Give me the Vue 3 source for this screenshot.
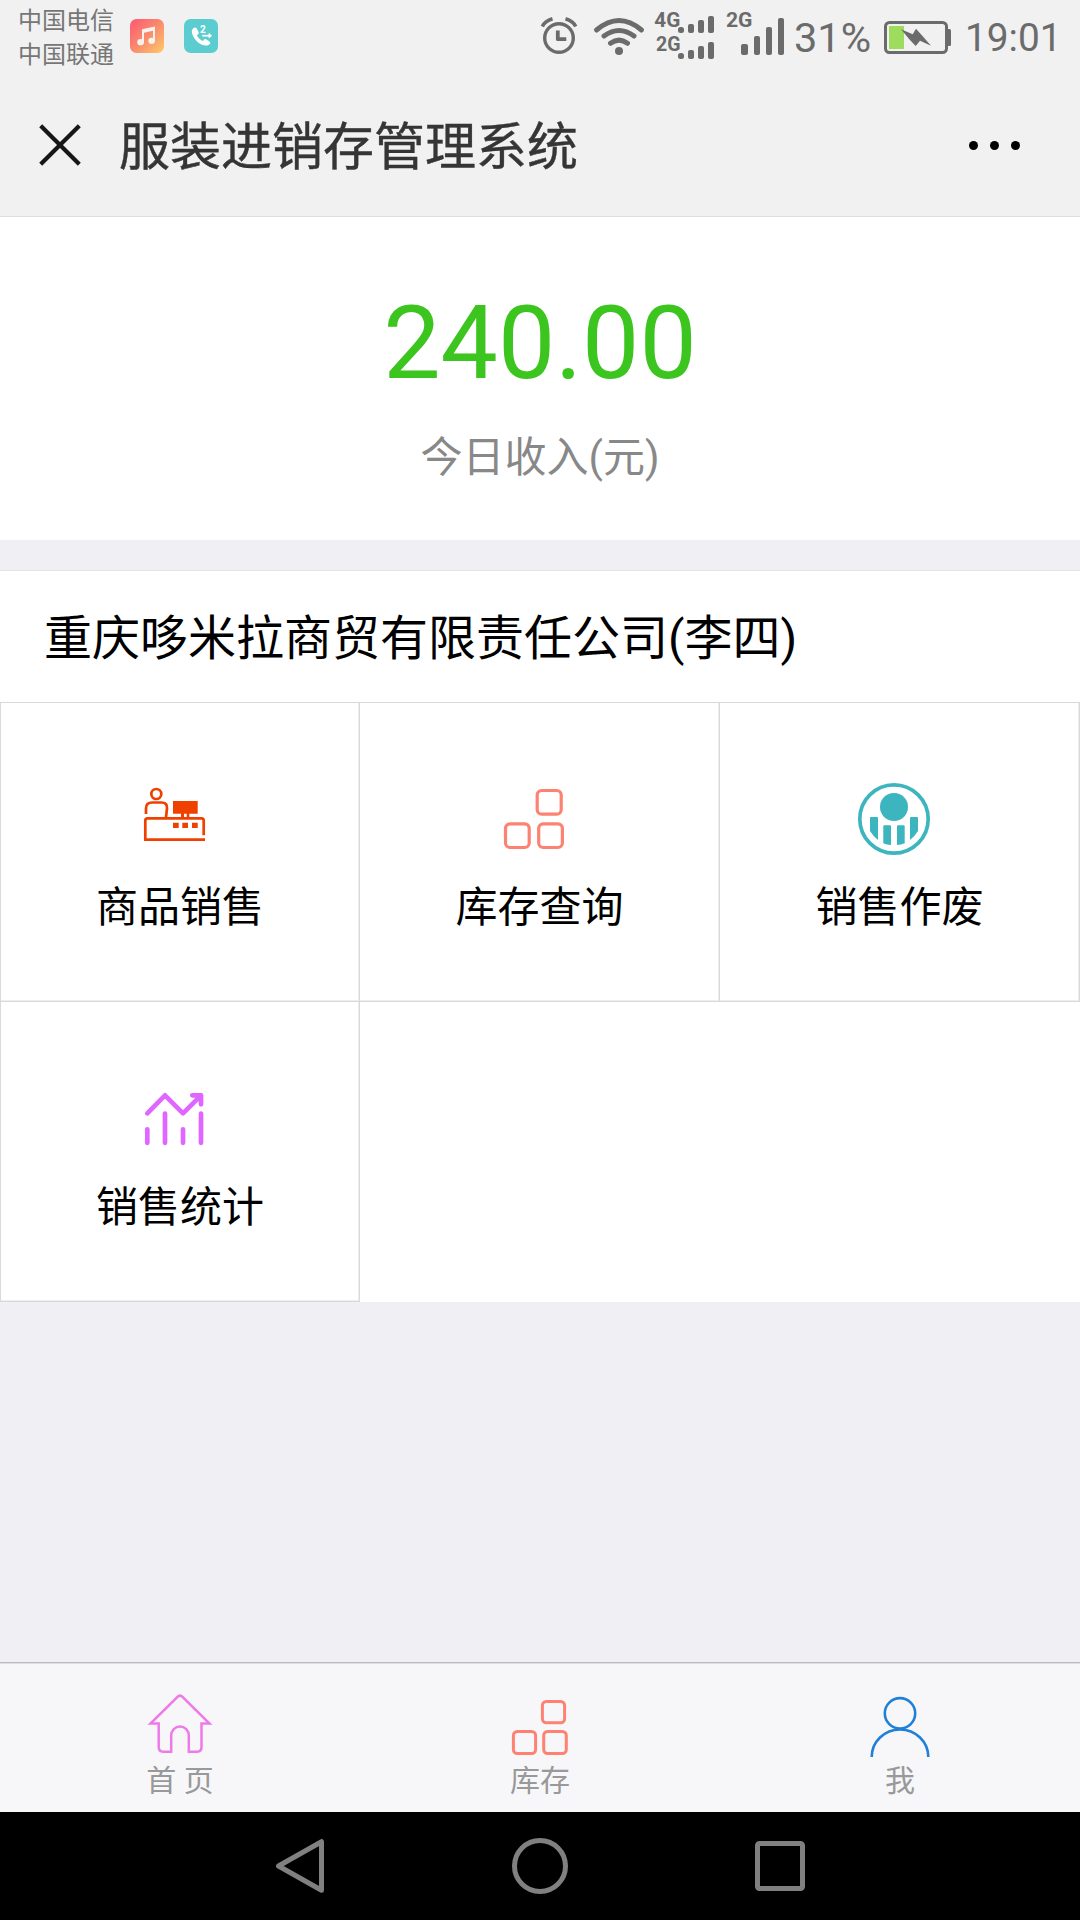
<script setup>
const carriers = ['中国电信', '中国联通']

const entries = [
  { id: 'sale', label: '商品销售' },
  { id: 'stock', label: '库存查询' },
  { id: 'void', label: '销售作废' },
  { id: 'stats', label: '销售统计' },
]

const tabs = [
  { id: 'home', label: '首 页' },
  { id: 'stock', label: '库存' },
  { id: 'me', label: '我' },
]
</script>

<template>
  <div class="screen">
    <header class="header">
      <div class="status">
        <div class="carriers">
          <span v-for="name in carriers" :key="name">{{ name }}</span>
        </div>
        <svg class="app-icon music" viewBox="0 0 34 34">
          <defs>
            <linearGradient id="musicBg" x1="0" y1="0" x2="1" y2="1">
              <stop offset="0" stop-color="#fb5773" />
              <stop offset="0.5" stop-color="#fb8a6c" />
              <stop offset="1" stop-color="#fccb68" />
            </linearGradient>
          </defs>
          <rect width="34" height="34" rx="6.5" fill="url(#musicBg)" />
          <path d="M12 10.3 25 7.6V22h-2V11.8l-9 1.9V23.5h-2z" fill="#f4f1ee" />
          <ellipse cx="10.6" cy="23.2" rx="3.4" ry="3.1" fill="#f4f1ee" />
          <ellipse cx="21.7" cy="21.8" rx="3.4" ry="3.1" fill="#f4f1ee" />
        </svg>
        <svg class="app-icon phone" viewBox="0 0 34 34">
          <rect width="34" height="34" rx="6.5" fill="#5bcdd0" />
          <path d="M9.3 9.2c-1.4 1-2 3-1 6 2 5.5 6.300 9.700 11.700 11 2.600.6 4.800.2 6-1.500.5-.8.300-1.600-.5-2.200l-3.400-2.200c-.8-.5-1.600-.3-2.200.5l-1 1.200c-2.600-1-4.800-3.200-6-5.800l1.200-1c.8-.7.9-1.500.5-2.300l-2-3.600c-.6-1-2-1-3.300-.1z" fill="#fff" />
          <path d="M18.300 16.700H26" stroke="#fff" stroke-width="1.800" />
          <path d="M24.700 13.800v5.800l3.400-2.900z" fill="#fff" />
          <text x="16" y="14.200" font-size="10" font-weight="700" fill="#fff">2</text>
        </svg>

        <svg class="alarm" viewBox="540 0 38 74">
          <g fill="none" stroke="#6b6b6b">
            <circle cx="559" cy="38" r="14.300" stroke-width="3.400" />
            <path d="M557.800 30.500v8.700h8.500" stroke-width="3.800" stroke-linejoin="round" />
            <path d="M542.300 26.500q2.500-5.500 10.200-7.800M575.700 26.500q-2.500-5.500-10.200-7.800" stroke-width="3.600" />
          </g>
        </svg>
        <svg class="wifi" viewBox="592 0 54 74">
          <g fill="none" stroke="#6b6b6b" stroke-width="5" stroke-linecap="round">
            <path d="M596.500 30Q619 11 641.500 30" />
            <path d="M604 36Q619 25 634 36" />
            <path d="M610.500 43.300Q619 37 627.500 43.300" />
          </g>
          <circle cx="619" cy="51" r="4" fill="#6b6b6b" />
        </svg>
        <svg class="signals" viewBox="652 0 134 74" fill="#6b6b6b">
          <text x="654.300" y="26.700" font-size="20" font-weight="700" textLength="26" lengthAdjust="spacingAndGlyphs">4G</text>
          <text x="656" y="50.700" font-size="20" font-weight="700" textLength="24.500" lengthAdjust="spacingAndGlyphs">2G</text>
          <rect x="678" y="27" width="6" height="6" rx="2.500" />
          <rect x="688" y="24" width="6" height="9" rx="2" />
          <rect x="698" y="20" width="6" height="13" rx="2" />
          <rect x="708" y="16" width="6" height="17" rx="2" />
          <rect x="678" y="53" width="6" height="6" rx="2.500" />
          <rect x="688" y="50" width="6" height="9" rx="2" />
          <rect x="698" y="46" width="6" height="13" rx="2" />
          <rect x="708" y="42" width="6" height="17" rx="2" />
          <text x="726" y="26.700" font-size="20.500" font-weight="700" textLength="26.500" lengthAdjust="spacingAndGlyphs">2G</text>
          <rect x="741" y="44" width="7" height="11" rx="2" />
          <rect x="754" y="36" width="6" height="19" rx="2" />
          <rect x="766" y="27" width="6" height="28" rx="2" />
          <rect x="778" y="18" width="6" height="37" rx="2" />
        </svg>
        <span class="percent">31%</span>
        <svg class="battery" viewBox="884 0 68 74">
          <rect x="885.500" y="22.500" width="61" height="30" rx="4" fill="none" stroke="#6b6b6b" stroke-width="3" />
          <path d="M948 29h1.500q1.500 0 1.500 1.500v14q0 1.500-1.500 1.500H948z" fill="#6b6b6b" />
          <rect x="889" y="26" width="15" height="23" fill="#9edc5e" />
          <path d="M901 29.300 912.700 34.300 916 28.800 922.500 36 931 45.700 920 40.700 915.700 46 909.500 39.500z" fill="#6b6b6b" />
        </svg>
        <span class="time">19:01</span>
      </div>

      <div class="titlebar">
        <svg class="close" viewBox="0 0 42 42">
          <path d="M1.700 1.700 40.300 40.300M40.300 1.700 1.700 40.300" stroke="#161616" stroke-width="4.200" />
        </svg>
        <h1>服装进销存管理系统</h1>
        <div class="more"><i></i><i></i><i></i></div>
      </div>
    </header>

    <section class="income">
      <div class="amount">240.00</div>
      <div class="caption">今日收入(元)</div>
    </section>

    <section class="panel">
      <h2>重庆哆米拉商贸有限责任公司(李四)</h2>
      <div class="grid">
        <div v-for="entry in entries" :key="entry.id" class="cell">
          <svg v-if="entry.id === 'sale'" viewBox="0 0 84 84">
            <g fill="none" stroke="#f04000" stroke-width="2.700">
              <circle cx="24.300" cy="17" r="5" />
              <path d="M14 37V31.500Q14 25.500 20 25.500H29.500Q35.500 25.500 35 31.500L34 40.500" />
              <path d="M73 62.700H13.300V43.500Q13.300 41.300 15.500 41.300H69.500Q71.700 41.300 71.700 43.500V58.300" />
            </g>
            <path d="M41 24h24.700v12.700H41zM49 36h3v5h-3zM54.700 36h2.600v5h-2.600zM41 45.700h5.700V51H41zM50.300 45.700H56V51h-5.700zM60 45.700h5.700V51H60z" fill="#f04000" />
          </svg>
          <svg v-else-if="entry.id === 'stock'" viewBox="0 0 84 84">
            <g fill="none" stroke="#fd8272" stroke-width="3.200">
              <rect x="45.200" y="13.500" width="24" height="23.700" rx="4.500" />
              <rect x="13.500" y="46.800" width="23.700" height="23.700" rx="4.500" />
              <rect x="46.700" y="46.800" width="23.700" height="23.700" rx="4.500" />
            </g>
          </svg>
          <svg v-else-if="entry.id === 'void'" viewBox="0 0 84 84">
            <circle cx="42" cy="42" r="34.200" fill="none" stroke="#3cb5bf" stroke-width="3.700" />
            <circle cx="42" cy="30" r="14" fill="#3cb5bf" />
            <path d="M19 40h6q1 0 1 1v22q-5-4-8-9V41q0-1 1-1zM65 40h-6q-1 0-1 1v22q5-4 8-9V41q0-1-1-1zM32.300 48.300H38q1 0 1 1V68q-4-.3-7.700-1.700V49.300q0-1 1-1zM51.700 48.300H46q-1 0-1 1V68q4-.3 7.700-1.700V49.300q0-1-1-1z" fill="#3cb5bf" />
          </svg>
          <svg v-else viewBox="0 0 84 84">
            <g fill="none" stroke="#df66ff" stroke-width="4.700" stroke-linecap="round" stroke-linejoin="round">
              <path d="M15.300 36.300 33 18.300 51 36.300 69 18.300M60.300 18.300H69V27.300" />
              <path d="M15.300 52.300V65.800M33 36.500V65.800M51 52.300V65.800M69 36.500V65.800" />
            </g>
          </svg>
          <span>{{ entry.label }}</span>
        </div>
      </div>
    </section>

    <nav class="tabs">
      <div v-for="tab in tabs" :key="tab.id" class="tab">
        <svg v-if="tab.id === 'home'" viewBox="0 0 72 72">
          <path d="M14.700 33.500H6.500L33.500 6.800Q36 4.400 38.500 6.800L65.500 33.500H57.500V57Q57.500 61.700 53 61.700H44.800V45.500A8.800 9 0 0 0 27.200 45.500V61.700H19.200Q14.700 61.700 14.700 57V32.300" fill="none" stroke="#ee7ae9" stroke-width="2.500" />
        </svg>
        <svg v-else-if="tab.id === 'stock'" viewBox="0 0 72 72">
          <g fill="none" stroke="#fd8272" stroke-width="3">
            <rect x="38.400" y="11.400" width="22.200" height="21.400" rx="4" />
            <rect x="9.400" y="41.400" width="22.200" height="22.200" rx="4" />
            <rect x="39.700" y="41.400" width="22.600" height="22.200" rx="4" />
          </g>
        </svg>
        <svg v-else viewBox="0 0 72 72">
          <g fill="none" stroke="#2080d8" stroke-width="2.600">
            <circle cx="36" cy="23.300" r="15.200" />
            <path d="M7.700 67A28.300 27.500 0 0 1 64.300 67" />
          </g>
        </svg>
        <span>{{ tab.label }}</span>
      </div>
    </nav>

    <footer class="system">
      <svg viewBox="0 0 60 60"><path d="M51.500 5.700V54.300L8.500 30z" stroke-linejoin="round" /></svg>
      <svg viewBox="0 0 60 60"><circle cx="30" cy="30" r="25.500" /></svg>
      <svg viewBox="0 0 60 60"><rect x="7.500" y="7.500" width="45" height="45" rx="2" /></svg>
    </footer>
  </div>
</template>

<style>
body {
  background: #efeff4;
}
</style>

<style scoped>
.screen {
  width: 1080px;
  height: 1920px;
  display: flex;
  flex-direction: column;
  background: #efeff4;
  overflow: hidden;
  font-family: Roboto, 'Noto Sans CJK SC', sans-serif;
  color: #000;
}
.screen * {
  box-sizing: border-box;
}
h1,
h2 {
  margin: 0;
  font-weight: 400;
}
svg {
  display: block;
  flex: none;
}

.header {
  height: 217px;
  background: #f1f1f1;
  border-bottom: 1px solid #dedede;
}
.status {
  height: 74px;
  display: flex;
  align-items: center;
  padding-left: 18px;
  color: #6b6b6b;
}
.carriers {
  width: 112px;
  padding-top: 2px;
  display: flex;
  flex-direction: column;
  font-size: 24px;
  line-height: 34px;
  color: #767676;
}
.app-icon {
  width: 34px;
  height: 34px;
  margin-bottom: 2px;
}
.music {
  margin-right: 20px;
}
.alarm {
  width: 38px;
  height: 74px;
  margin-left: 322px;
}
.wifi {
  width: 54px;
  height: 74px;
  margin-left: 14px;
}
.signals {
  width: 134px;
  height: 74px;
  margin-left: 6px;
}
.percent {
  width: 90px;
  margin-left: 8px;
  padding-top: 2px;
  font-size: 41.500px;
  line-height: 74px;
}
.battery {
  width: 68px;
  height: 74px;
}
.time {
  margin-left: 13px;
  padding-top: 2px;
  font-size: 38.800px;
  line-height: 74px;
}

.titlebar {
  height: 142px;
  display: flex;
  align-items: center;
  padding: 0 60px 0 39px;
}
.close {
  width: 42px;
  height: 42px;
}
.titlebar h1 {
  margin-left: 38px;
  padding-top: 6px;
  font-size: 51px;
  line-height: 70px;
  color: #353535;
  -webkit-text-stroke: 0.4px #353535;
}
.more {
  display: flex;
  gap: 12px;
  margin-left: auto;
}
.more i {
  width: 9px;
  height: 9px;
  border-radius: 50%;
  background: #000;
}

.income {
  height: 323px;
  padding-top: 66px;
  background: #fff;
  text-align: center;
}
.amount {
  font-size: 102px;
  line-height: 120px;
  color: #3cc51f;
}
.caption {
  margin-top: 25px;
  font-size: 42px;
  line-height: 60px;
  color: #888;
}

.panel {
  margin-top: 30px;
  background: #fff;
  border-top: 1px solid #e3e3e5;
}
.panel h2 {
  height: 131px;
  padding: 2px 0 0 44px;
  font-size: 48px;
  line-height: 131px;
}
.grid {
  display: grid;
  grid-template-columns: repeat(3, 360px);
  grid-auto-rows: 300px;
}
.cell {
  display: flex;
  flex-direction: column;
  align-items: center;
  padding-top: 75px;
  border-right: 1px solid #d9d9d9;
  border-bottom: 1px solid #d9d9d9;
  box-shadow: inset -1px -1px #eee;
}
.cell:nth-child(-n + 3) {
  padding-top: 74px;
  border-top: 1px solid #d9d9d9;
}
.cell:nth-child(3n + 1) {
  border-left: 1px solid #d9d9d9;
}
.cell svg {
  width: 84px;
  height: 84px;
  margin-right: 12px;
}
.cell span {
  margin-top: 17px;
  font-size: 42px;
  line-height: 60px;
}

.tabs {
  height: 150px;
  margin-top: auto;
  display: flex;
  background: #f7f7fa;
  border-top: 1px solid #bcbcbf;
  box-shadow: inset 0 1px #e0e0e2;
}
.tab {
  width: 360px;
  display: flex;
  flex-direction: column;
  align-items: center;
  padding-top: 27px;
  font-size: 30px;
  line-height: 36px;
  color: #999;
}
.tab svg {
  width: 72px;
  height: 72px;
  margin-bottom: 1px;
}

.system {
  height: 108px;
  display: flex;
  justify-content: center;
  align-items: center;
  gap: 180px;
  background: #000;
}
.system svg {
  width: 60px;
  height: 60px;
  fill: none;
  stroke: #808080;
  stroke-width: 5;
}
</style>
